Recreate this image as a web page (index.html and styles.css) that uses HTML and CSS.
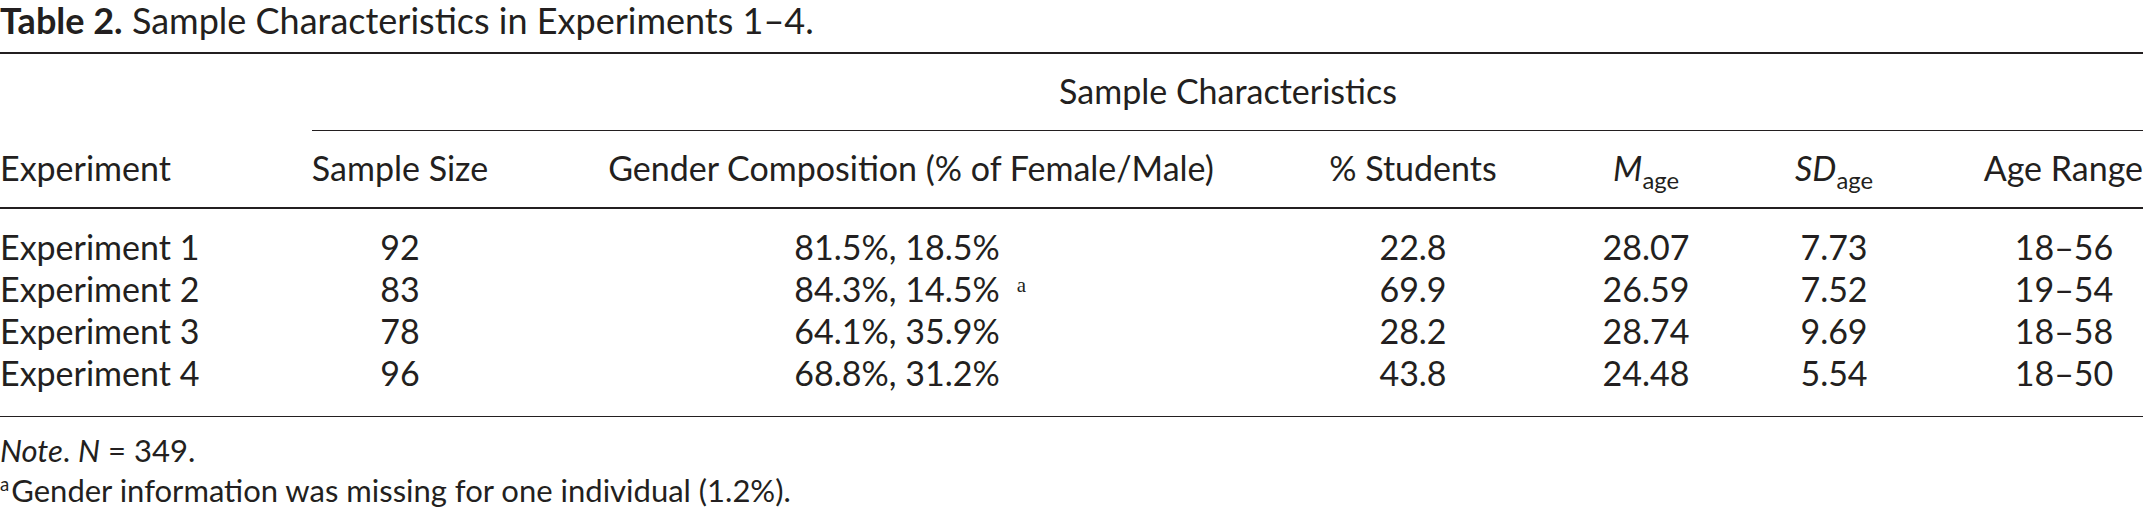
FILE: index.html
```html
<!DOCTYPE html>
<html lang="en">
<head>
<meta charset="utf-8">
<title>Table 2. Sample Characteristics in Experiments 1–4</title>
<link rel="stylesheet" href="styles.css">
</head>
<body>
<div class="page">
  <p class="caption"><b>Table 2.</b> Sample Characteristics in Experiments 1–4.</p>
  <div class="rule"></div>
  <div class="grid spanner-row">
    <div class="spanner">Sample Characteristics</div>
  </div>
  <div class="spanner-rule-wrap"><div class="rule"></div></div>
  <div class="grid head">
    <div class="c1">Experiment</div>
    <div class="c2">Sample Size</div>
    <div class="c3">Gender Composition (% of Female/Male)</div>
    <div class="c4">% Students</div>
    <div class="c5"><i>M</i><sub>age</sub></div>
    <div class="c6"><i>SD</i><sub>age</sub></div>
    <div class="c7 hdr-right">Age Range</div>
  </div>
  <div class="rule"></div>
  <div class="grid body">
    <div class="c1">Experiment 1</div>
    <div class="c2">92</div>
    <div class="c3 val">81.5%, 18.5%</div>
    <div class="c4">22.8</div>
    <div class="c5">28.07</div>
    <div class="c6">7.73</div>
    <div class="c7">18–56</div>

    <div class="c1">Experiment 2</div>
    <div class="c2">83</div>
    <div class="c3 val">84.3%, 14.5%<sup class="fn">a</sup></div>
    <div class="c4">69.9</div>
    <div class="c5">26.59</div>
    <div class="c6">7.52</div>
    <div class="c7">19–54</div>

    <div class="c1">Experiment 3</div>
    <div class="c2">78</div>
    <div class="c3 val">64.1%, 35.9%</div>
    <div class="c4">28.2</div>
    <div class="c5">28.74</div>
    <div class="c6">9.69</div>
    <div class="c7">18–58</div>

    <div class="c1">Experiment 4</div>
    <div class="c2">96</div>
    <div class="c3 val">68.8%, 31.2%</div>
    <div class="c4">43.8</div>
    <div class="c5">24.48</div>
    <div class="c6">5.54</div>
    <div class="c7">18–50</div>
  </div>
  <div class="rule"></div>
  <div class="notes">
    <p><i>Note</i>. <i>N</i> = 349.</p>
    <p><sup class="fn-note">a</sup>Gender information was missing for one individual (1.2%).</p>
  </div>
</div>
</body>
</html>
```

FILE: styles.css
```css
html, body {
  margin: 0;
  padding: 0;
  background: #ffffff;
}

body {
  font-family: "Lato", "Noto Sans", sans-serif;
  font-size: 34px;
  color: #231f20;
}

.page {
  width: 2143px;
}

p {
  margin: 0;
}

.caption {
  font-size: 36px;
  line-height: 40px;
  margin-bottom: 12px;
  white-space: nowrap;
}

.caption b {
  font-weight: 700;
}

.rule {
  height: 1.6px;
  background: #231f20;
}

.grid {
  display: grid;
  grid-template-columns: 300px 200px 822px 182px 284px 92px 263px;
  line-height: 42px;
}

.grid > div {
  text-align: center;
  white-space: nowrap;
}

.grid > .c1 {
  text-align: left;
}

.grid > .c3.val {
  padding-right: 28px;
}

.grid > .c7 {
  padding-left: 105px;
}

.grid > .c7.hdr-right {
  padding-left: 0;
  text-align: right;
}

.spanner-row {
  padding-top: 16px;
  padding-bottom: 18px;
}

.spanner {
  grid-column: 2 / 8;
  text-align: center;
  padding-left: 13px;
}

.spanner-rule-wrap {
  padding-left: 312px;
}

.head {
  padding-top: 16px;
  padding-bottom: 18px;
}

.head sub {
  font-size: 0.7em;
  vertical-align: -0.32em;
  line-height: 0;
}

.body {
  padding-top: 17px;
  padding-bottom: 22px;
}

.fn {
  display: inline-block;
  width: 0;
  text-indent: 17px;
  font-family: "Liberation Serif", serif;
  font-size: 21px;
  line-height: 1;
  vertical-align: 10px;
}

.notes {
  font-size: 31px;
  padding-top: 13px;
  line-height: 40px;
}

.fn-note {
  font-size: 0.6em;
  vertical-align: 0.62em;
  line-height: 0;
  margin-right: 2px;
}
```
